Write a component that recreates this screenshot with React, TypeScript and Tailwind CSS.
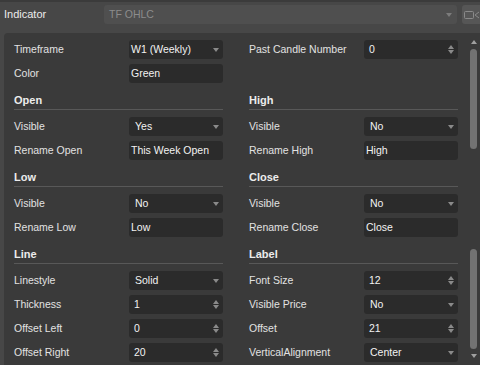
import type { ReactNode } from "react";

type Field =
  | { kind: "select"; value: string; pad?: string }
  | { kind: "text"; value: string }
  | { kind: "number"; value: string };

type Cell =
  | { type: "row"; label: string; field?: Field }
  | { type: "head"; title: string };

const left: Cell[] = [
  { type: "row", label: "Timeframe", field: { kind: "select", value: "W1 (Weekly)", pad: "pl-[2px]" } },
  { type: "row", label: "Color", field: { kind: "text", value: "Green" } },
  { type: "head", title: "Open" },
  { type: "row", label: "Visible", field: { kind: "select", value: "Yes" } },
  { type: "row", label: "Rename Open", field: { kind: "text", value: "This Week Open" } },
  { type: "head", title: "Low" },
  { type: "row", label: "Visible", field: { kind: "select", value: "No" } },
  { type: "row", label: "Rename Low", field: { kind: "text", value: "Low" } },
  { type: "head", title: "Line" },
  { type: "row", label: "Linestyle", field: { kind: "select", value: "Solid" } },
  { type: "row", label: "Thickness", field: { kind: "number", value: "1" } },
  { type: "row", label: "Offset Left", field: { kind: "number", value: "0" } },
  { type: "row", label: "Offset Right", field: { kind: "number", value: "20" } },
];

const right: Cell[] = [
  { type: "row", label: "Past Candle Number", field: { kind: "number", value: "0" } },
  { type: "row", label: "" },
  { type: "head", title: "High" },
  { type: "row", label: "Visible", field: { kind: "select", value: "No" } },
  { type: "row", label: "Rename High", field: { kind: "text", value: "High" } },
  { type: "head", title: "Close" },
  { type: "row", label: "Visible", field: { kind: "select", value: "No" } },
  { type: "row", label: "Rename Close", field: { kind: "text", value: "Close" } },
  { type: "head", title: "Label" },
  { type: "row", label: "Font Size", field: { kind: "number", value: "12" } },
  { type: "row", label: "Visible Price", field: { kind: "select", value: "No" } },
  { type: "row", label: "Offset", field: { kind: "number", value: "21" } },
  { type: "row", label: "VerticalAlignment", field: { kind: "select", value: "Center" } },
];

function Down({ color = "#8a8a8a" }: { color?: string }) {
  return (
    <svg width="6" height="4" viewBox="0 0 6 4">
      <path d="M0 0H6L3 4Z" fill={color} />
    </svg>
  );
}

function Up({ color = "#8a8a8a" }: { color?: string }) {
  return (
    <svg width="6" height="4" viewBox="0 0 6 4">
      <path d="M0 4H6L3 0Z" fill={color} />
    </svg>
  );
}

function Input({ field }: { field: Field }) {
  let pad = "pl-[6px]";
  let tail: ReactNode = null;
  if (field.kind === "select") {
    pad = field.pad ?? "pl-[6px]";
    tail = <Down />;
  } else if (field.kind === "number") {
    pad = "pl-[5px]";
    tail = (
      <div className="flex flex-col gap-[1px]">
        <Up />
        <Down />
      </div>
    );
  } else {
    pad = "pl-[2px]";
  }
  return (
    <div className={`flex h-[19px] w-[94px] items-center justify-between rounded-[3px] bg-[#2b2b2b] pr-[4px] text-[#f2f2f2] ${pad}`}>
      <span className="whitespace-nowrap">{field.value}</span>
      {tail}
    </div>
  );
}

function Column({ cells }: { cells: Cell[] }) {
  return (
    <div className="flex w-[209px] flex-col">
      {cells.map((c, i) =>
        c.type === "head" ? (
          <div
            key={i}
            className="mb-[5px] flex h-[24px] items-end border-b border-[#585858] pb-[2px] text-[11px] leading-[13px] font-bold text-[#ececec]"
          >
            {c.title}
          </div>
        ) : (
          <div key={i} className="flex h-[24px] items-center">
            <span className="flex-1 whitespace-nowrap text-[#e2e2e2]">{c.label}</span>
            {c.field && <Input field={c.field} />}
          </div>
        )
      )}
    </div>
  );
}

function Scrollbar() {
  return (
    <div className="ml-[12px] flex w-[7px] flex-col items-center pt-[7px]">
      <Up color="#a0a0a0" />
      <div className="mt-[5px] h-[100px] w-[7px] rounded-[4px] bg-[#727272]" />
      <div className="h-[100px]" />
      <div className="h-[100px] w-[7px] rounded-[4px] bg-[#727272]" />
      <div className="mt-[5px]">
        <Down color="#a0a0a0" />
      </div>
    </div>
  );
}

export default function App() {
  return (
    <div className="h-[365px] w-[480px] overflow-hidden bg-[#474747] font-['Liberation_Sans',Arial,sans-serif] text-[10.5px]">
      <div className="h-[2px] bg-[#3b3b3b]" />
      <div className="mt-[3px] flex h-[19px] items-center">
        <span className="w-[104px] pl-[4px] text-[11px] text-[#ececec]">Indicator</span>
        <div className="flex h-[19px] w-[353px] items-center justify-between rounded-[3px] bg-[#4f4f4f] pl-[5px] pr-[5px] text-[#8c8c8c]">
          <span>TF OHLC</span>
          <Down color="#7c7c7c" />
        </div>
        <div className="ml-[5px] flex h-[19px] flex-1 items-center rounded-l-[3px] bg-[#565656] pl-[2px]">
          <svg width="16" height="10" viewBox="0 0 16 10">
            <rect x="0.5" y="1.5" width="9" height="7" rx="1" fill="none" stroke="#8a8a8a" />
            <path d="M15 2L11 5L15 8" fill="none" stroke="#8a8a8a" />
          </svg>
        </div>
      </div>
      <div className="ml-[4px] mt-[9px] flex h-[400px] rounded-tl-[4px] bg-[#3a3a3a]">
        <div className="flex gap-x-[26px] pl-[10px] pt-[4.5px]">
          <Column cells={left} />
          <Column cells={right} />
        </div>
        <Scrollbar />
      </div>
    </div>
  );
}
